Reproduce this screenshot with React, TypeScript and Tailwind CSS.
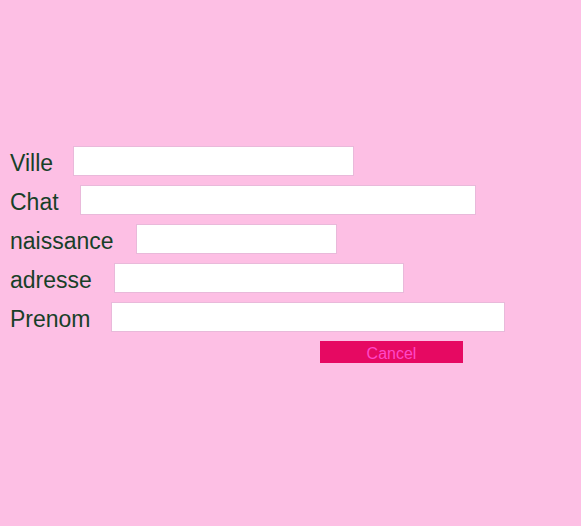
import React from 'react';

const fields = [
  { label: 'Ville', labelW: 'w-[63px]', inputW: 'w-[281px]' },
  { label: 'Chat', labelW: 'w-[70px]', inputW: 'w-[396px]' },
  { label: 'naissance', labelW: 'w-[126px]', inputW: 'w-[201px]' },
  { label: 'adresse', labelW: 'w-[104px]', inputW: 'w-[290px]' },
  { label: 'Prenom', labelW: 'w-[101px]', inputW: 'w-[394px]' },
];

export default function App() {
  return (
    <div
      className="w-[581px] h-[526px] bg-[#fdbfe4] pt-[146px] pl-[10px]"
      style={{ fontFamily: '"Liberation Sans", Arial, sans-serif' }}
    >
      <form className="flex flex-col">
        {fields.map((f) => (
          <div key={f.label} className="flex items-center h-[30px] mb-[9px]">
            <label className={`${f.labelW} shrink-0 text-[23px] leading-none text-[#183f28] pt-[4px]`}>
              {f.label}
            </label>
            <input
              type="text"
              className={`${f.inputW} h-[30px] bg-white border border-[#e9b9da] outline-none`}
            />
          </div>
        ))}
        <div className="flex">
          <button
            type="button"
            className="ml-[310px] w-[143px] h-[22px] bg-[#e60962] text-[#ff48c8] text-[16px] leading-none pt-[4px]"
          >
            Cancel
          </button>
        </div>
      </form>
    </div>
  );
}
